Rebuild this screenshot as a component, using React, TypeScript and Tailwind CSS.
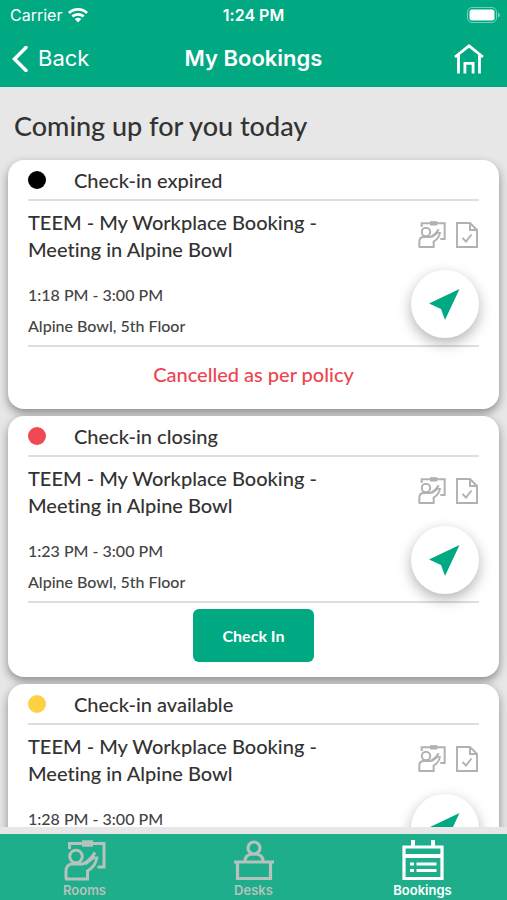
import type { ReactNode } from "react";

type BookingStatus = "expired" | "closing" | "available";

interface Booking {
  id: number;
  status: BookingStatus;
  title: string;
  time: string;
  location: string;
}

const bookings: Booking[] = [
  {
    id: 1,
    status: "expired",
    title: "TEEM - My Workplace Booking - Meeting in Alpine Bowl",
    time: "1:18 PM - 3:00 PM",
    location: "Alpine Bowl, 5th Floor",
  },
  {
    id: 2,
    status: "closing",
    title: "TEEM - My Workplace Booking - Meeting in Alpine Bowl",
    time: "1:23 PM - 3:00 PM",
    location: "Alpine Bowl, 5th Floor",
  },
  {
    id: 3,
    status: "available",
    title: "TEEM - My Workplace Booking - Meeting in Alpine Bowl",
    time: "1:28 PM - 3:00 PM",
    location: "Alpine Bowl, 5th Floor",
  },
];

const statusStyles: Record<BookingStatus, { label: string; dot: string }> = {
  expired: { label: "Check-in expired", dot: "bg-black" },
  closing: { label: "Check-in closing", dot: "bg-[#f04953]" },
  available: { label: "Check-in available", dot: "bg-[#ffd042]" },
};

function WifiIcon() {
  return (
    <svg viewBox="0 0 20 15" className="h-[15px] w-5" fill="currentColor" aria-hidden="true">
      <path d="M10 0C6.200 0 2.700 1.500 0 4L1.900 6C4 4 6.900 2.800 10 2.800S16 4 18.100 6L20 4C17.300 1.500 13.800 0 10 0Z" />
      <path d="M10 5C7.500 5 5.200 6 3.400 7.600L5.300 9.500C6.600 8.400 8.200 7.700 10 7.700s3.400.7 4.700 1.800l1.900-1.900C14.800 6 12.500 5 10 5Z" />
      <path d="M10 9.800c-1.200 0-2.300.5-3.200 1.300L10 14.500l3.200-3.400c-.9-.8-2-1.300-3.200-1.300Z" />
    </svg>
  );
}

function BatteryIcon() {
  return (
    <svg viewBox="0 0 34 16" className="h-4 w-[34px]" aria-hidden="true">
      <rect x="0.500" y="0.500" width="29" height="15" rx="4.500" fill="none" stroke="white" strokeOpacity="0.450" />
      <rect x="2.500" y="2.500" width="25" height="11" rx="2.500" fill="white" />
      <path d="M31 5.500c1.300.5 1.800 1.400 1.800 2.500s-.5 2-1.800 2.500Z" fill="white" fillOpacity="0.500" />
    </svg>
  );
}

function HomeIcon() {
  return (
    <svg viewBox="0 0 30 30" className="size-[30px]" fill="none" stroke="currentColor" strokeWidth="2.800" aria-hidden="true">
      <path d="M1 13 15 1.800 29 13" />
      <path d="M4.500 11v18.500M25.500 11v18.500" />
      <path d="M10.900 29.500V19.400h8.200v10.100" />
    </svg>
  );
}

function RoomIcon({ className }: { className: string }) {
  return (
    <svg viewBox="0 0 42 42" className={className} fill="none" stroke="currentColor" strokeWidth="3" aria-hidden="true">
      <path d="M5.500 9V3.500H40v23.500h-6.500" />
      <path d="M18 3.500h11" strokeWidth="6.500" />
      <circle cx="12" cy="16.500" r="6.300" />
      <path d="M2 39V31c0-4 2.500-7 6.500-7h10c5-2 9-5.500 12.500-11.500M33 16.500c-.5 6-3.500 11-9.500 14.500v8H1" />
      <path d="M21 24l10-7.500" />
    </svg>
  );
}

function DeskIcon() {
  return (
    <svg viewBox="0 0 42 42" className="size-[42px]" fill="none" stroke="currentColor" strokeWidth="3.200" aria-hidden="true">
      <circle cx="21" cy="8" r="6" />
      <path d="M12 21c0-4.500 3.500-7 9-7s9 2.500 9 7" />
      <path d="M1 22h40M4.500 22.500v16h33v-16" />
    </svg>
  );
}

function CalendarIcon() {
  return (
    <svg viewBox="0 0 42 42" className="size-[42px]" fill="none" stroke="currentColor" strokeWidth="3.200" aria-hidden="true">
      <path d="M2 7h38v31.500H2Z" />
      <path d="M2 16h38" strokeWidth="4" />
      <path d="M11 0v7M31 0v7" strokeWidth="4" />
      <path d="M8 24h4M8 30.500h4M14.500 24h20M14.500 30.500h20" />
    </svg>
  );
}

function DocumentCheckIcon() {
  return (
    <svg viewBox="0 0 22 26" className="h-[26px] w-[22px]" fill="none" stroke="currentColor" strokeWidth="1.900" aria-hidden="true">
      <path d="M1 1h13l7 7v17H1Z" />
      <path d="M14 1v7h7" />
      <path d="M6.500 16l3.500 3.500 5.500-7" />
    </svg>
  );
}

function NavigateIcon() {
  return (
    <svg viewBox="0 0 32 32" className="size-8" fill="currentColor" aria-hidden="true">
      <path d="M30.500 1 16 32.000 12 21 0 15.500Z" />
    </svg>
  );
}

function BookingCard({ booking }: { booking: Booking }) {
  const { label, dot } = statusStyles[booking.status];

  return (
    <article className="rounded-2xl bg-white px-5 shadow-[0_4px_10px_rgba(0,0,0,0.4)]">
      <div className="flex h-[41px] items-center gap-7 border-b-2 border-[#dedede]">
        <span className={`size-[18px] rounded-full ${dot}`} />
        <span className="text-xl">{label}</span>
      </div>

      <div className="flex justify-between border-b-2 border-[#dedede] pt-2 pb-[7px]">
        <div className="w-[310px]">
          <h2 className="text-xl leading-[27px]">{booking.title}</h2>
          <p className="mt-5 text-base leading-6 text-[#444444]">{booking.time}</p>
          <p className="mt-[7px] text-base leading-6 text-[#444444]">{booking.location}</p>
        </div>
        <div className="flex flex-col items-end justify-between pt-3">
          <div className="flex items-center gap-[10px] pr-px text-[#b1b1b1]">
            <RoomIcon className="size-7" />
            <DocumentCheckIcon />
          </div>
          <button
            type="button"
            aria-label="Get directions"
            className="flex size-[68px] items-center justify-center rounded-full bg-white text-[#01a982] shadow-[0_5px_14px_rgba(0,0,0,0.3)]"
          >
            <NavigateIcon />
          </button>
        </div>
      </div>

      {booking.status === "expired" ? (
        <p className="pt-[13px] pb-[21px] text-center text-xl leading-7 text-[#ee4450]">Cancelled as per policy</p>
      ) : (
        <div className="flex justify-center pt-[6px] pb-[15px]">
          <button type="button" className="h-[53px] w-[121px] rounded-md bg-[#01a982] text-base font-bold text-white">
            Check In
          </button>
        </div>
      )}
    </article>
  );
}

function TabLink({ label, active, children }: { label: string; active?: boolean; children: ReactNode }) {
  return (
    <a
      href={`#${label.toLowerCase()}`}
      aria-current={active ? "page" : undefined}
      className={`flex flex-1 flex-col items-center justify-end text-[13px] leading-4 font-semibold ${active ? "text-white" : "text-[#b5c2bd]"}`}
    >
      {children}
      <span>{label}</span>
    </a>
  );
}

export default function App() {
  return (
    <div className="flex h-screen flex-col overflow-hidden bg-[#e7e7e7] font-['Lato','Noto_Sans',sans-serif] font-medium text-[#333333] [font-variant-ligatures:none]">
      <header className="bg-[#01a982] font-['Inter',sans-serif] text-white">
        {/* Status bar */}
        <div className="grid h-[30px] grid-cols-3 items-center px-[6px] text-base">
          <div className="flex items-center gap-[6px] pl-1 font-normal">
            <span>Carrier</span>
            <WifiIcon />
          </div>
          <span className="text-center font-semibold">1:24 PM</span>
          <div className="flex justify-end">
            <BatteryIcon />
          </div>
        </div>

        {/* Navigation bar */}
        <div className="grid h-[57px] grid-cols-3 items-center px-3">
          <button type="button" className="flex items-center gap-[10px] text-[22px] font-normal">
            <svg viewBox="0 0 16 26" className="h-[26px] w-4" fill="none" stroke="currentColor" strokeWidth="3.500" aria-hidden="true">
              <path d="M14 1.500 2.500 13 14 24.500" strokeLinecap="round" />
            </svg>
            Back
          </button>
          <h1 className="text-center text-[22px] font-semibold whitespace-nowrap">My Bookings</h1>
          <button type="button" aria-label="Home" className="justify-self-end pr-[11px]">
            <HomeIcon />
          </button>
        </div>
      </header>

      <main className="min-h-0 flex-1 overflow-y-auto [scrollbar-width:none]">
        <h2 className="px-[14px] pt-[22px] pb-[18px] text-[27px] leading-[33px]">Coming up for you today</h2>
        <div className="flex flex-col gap-[7px] px-2 pb-3">
          {bookings.map((booking) => (
            <BookingCard key={booking.id} booking={booking} />
          ))}
        </div>
      </main>

      <nav className="mt-[7px] flex h-[66px] shrink-0 bg-[#1fae8b] pb-[2px] font-['Inter',sans-serif]">
        <TabLink label="Rooms">
          <RoomIcon className="size-[42px]" />
        </TabLink>
        <TabLink label="Desks">
          <DeskIcon />
        </TabLink>
        <TabLink label="Bookings" active>
          <CalendarIcon />
        </TabLink>
      </nav>
    </div>
  );
}
